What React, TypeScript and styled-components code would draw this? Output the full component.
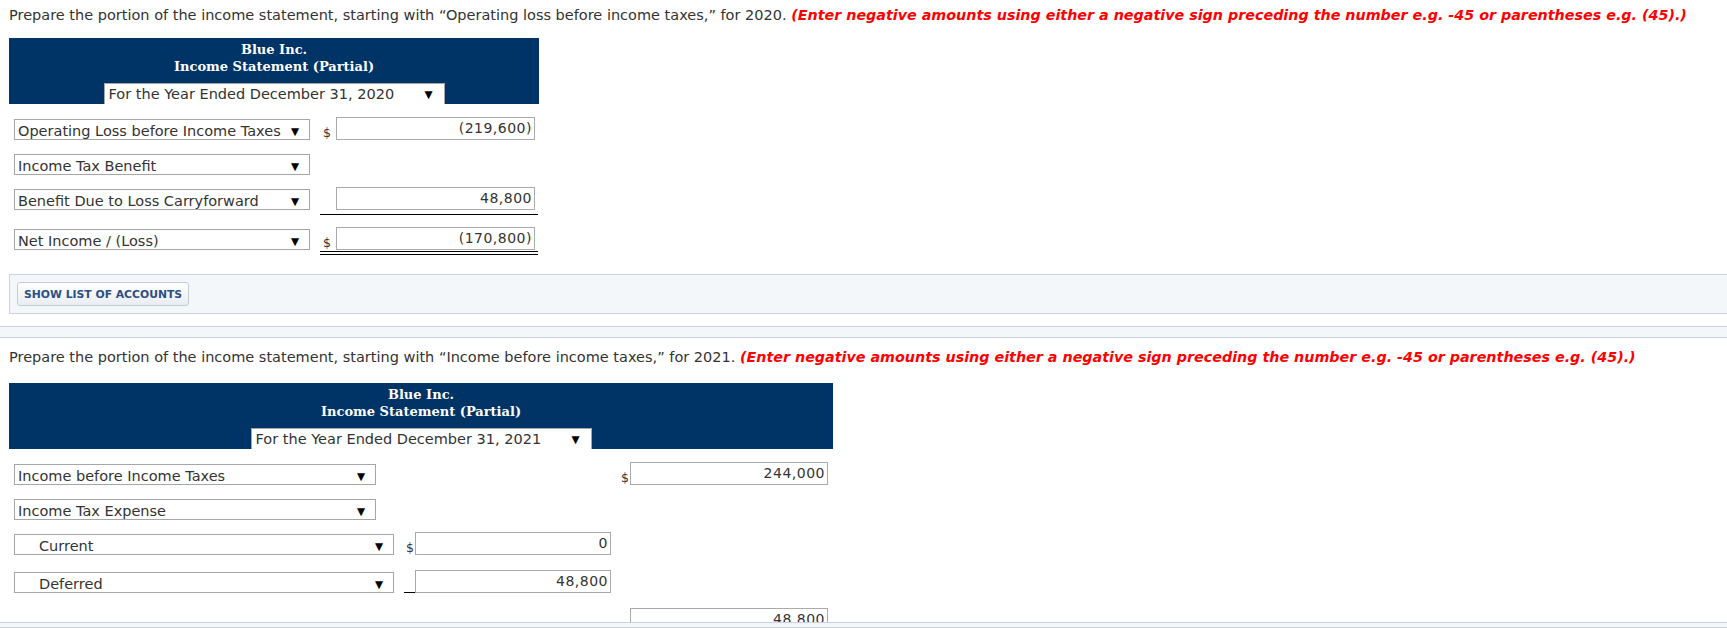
import styled, { createGlobalStyle } from "styled-components";

const GlobalStyle = createGlobalStyle`
  body {
    margin: 0;
    background: #fff;
    font-family: "DejaVu Sans", Verdana, sans-serif;
    color: #333;
  }
`;

const Page = styled.div`
  display: flex;
  flex-direction: column;
  height: 628px;
  overflow: hidden;
`;

const Section = styled.section<{ $clip?: boolean }>`
  padding-left: 9px;
  ${(p) => (p.$clip ? "flex: 1 1 0; min-height: 0; overflow: hidden;" : "flex: none;")}
`;

const Instruction = styled.p<{ $top: number }>`
  margin: ${(p) => p.$top}px 0 0;
  font-size: 14.5px;
  line-height: 16px;
  white-space: nowrap;
`;

const Hint = styled.span`
  color: #ff0000;
  font-weight: bold;
  font-style: italic;
  font-size: 14.3px;
`;

const Header = styled.div<{ $w: number; $top: number }>`
  width: ${(p) => p.$w}px;
  height: 66px;
  box-sizing: border-box;
  margin-top: ${(p) => p.$top}px;
  background: #003366;
  color: #fff;
  display: flex;
  flex-direction: column;
  align-items: center;
  padding-top: 3px;
  font-family: "DejaVu Serif", Georgia, serif;
  font-weight: bold;
  font-size: 13px;
  line-height: 17px;
`;

const DateSelect = styled.div`
  box-sizing: border-box;
  width: 341px;
  height: 21px;
  margin-top: auto;
  display: flex;
  align-items: center;
  justify-content: space-between;
  padding: 1px 11px 0 4px;
  background: #fff;
  border: 1px solid #a6a6a6;
  border-bottom: none;
  color: #333;
  font-family: "DejaVu Sans", Verdana, sans-serif;
  font-weight: normal;
  font-size: 14.5px;
`;

const Rows = styled.div`
  display: flex;
  flex-direction: column;
  gap: 12px;
  padding: 13px 0 0 5px;
`;

const Row = styled.div<{ $cols: string }>`
  display: grid;
  grid-template-columns: ${(p) => p.$cols};
  align-items: start;
`;

const Select = styled.div<{ $w: number; $indent?: boolean }>`
  box-sizing: border-box;
  width: ${(p) => p.$w}px;
  height: 21px;
  margin-top: 2px;
  display: flex;
  align-items: center;
  justify-content: space-between;
  padding: 2px 10px 0 ${(p) => (p.$indent ? 24 : 3)}px;
  background: #fff;
  border: 1px solid #a6a6a6;
  font-size: 14.5px;
  white-space: nowrap;
`;

const Arrow = styled.span`
  font-size: 10.5px;
  color: #000;
  margin-left: 4px;
`;

const Cell = styled.div<{ $line?: "single" | "double" | "space" }>`
  display: flex;
  align-items: flex-end;
  padding-right: 3px;
  width: fit-content;
  ${(p) =>
    p.$line === "single"
      ? "padding-bottom: 4px; border-bottom: 1px solid #000;"
      : p.$line === "double"
      ? "padding-bottom: 1px; border-bottom: 4px double #000;"
      : p.$line === "space"
      ? "padding-bottom: 3px;"
      : ""}
`;

const Dollar = styled.span<{ $w: number; $pad: number; $under?: boolean }>`
  box-sizing: border-box;
  width: ${(p) => p.$w}px;
  height: 23px;
  display: flex;
  align-items: flex-end;
  padding-left: ${(p) => p.$pad}px;
  font-size: 12.5px;
  line-height: 14px;
  color: #333;
  ${(p) => (p.$under ? "border-bottom: 1px solid #000;" : "")}
`;

const Amount = styled.div<{ $w: number }>`
  box-sizing: border-box;
  width: ${(p) => p.$w}px;
  height: 23px;
  border: 1px solid #aaa;
  background: #fff;
  text-align: right;
  padding-right: 2px;
  font-size: 14px;
  letter-spacing: 0.5px;
  line-height: 20px;
`;

const Panel = styled.div`
  margin-top: 19px;
  box-sizing: border-box;
  height: 40px;
  background: #f4f7fa;
  border: 1px solid #cbd2de;
  border-right: none;
  padding: 7px 0 0 7px;
`;

const AccountsButton = styled.button`
  height: 24px;
  padding: 0 6px;
  background: linear-gradient(#ffffff, #e9edf2);
  border: 1px solid #c5cdd8;
  border-radius: 3px;
  color: #2b4f86;
  font-family: "DejaVu Sans", Verdana, sans-serif;
  font-weight: bold;
  font-size: 10.8px;
`;

const Strip = styled.div<{ $top: number; $h: number }>`
  flex: none;
  margin-top: ${(p) => p.$top}px;
  height: ${(p) => p.$h}px;
  background: #f4f7fa;
  border-top: 1px solid #cbd2de;
  border-bottom: 1px solid #cbd2de;
`;

type Line = "single" | "double" | "space";
type AmountSpec = { dollar?: boolean; under?: boolean; value: string; line?: Line };

function Money({ spec, slot, pad, w }: { spec: AmountSpec; slot: number; pad: number; w: number }) {
  return (
    <Cell $line={spec.line}>
      <Dollar $w={slot} $pad={pad} $under={spec.under}>
        {spec.dollar ? "$" : ""}
      </Dollar>
      <Amount $w={w}>{spec.value}</Amount>
    </Cell>
  );
}

const rows2020: { label: string; cell?: AmountSpec }[] = [
  { label: "Operating Loss before Income Taxes", cell: { dollar: true, value: "(219,600)" } },
  { label: "Income Tax Benefit" },
  { label: "Benefit Due to Loss Carryforward", cell: { value: "48,800", line: "single" } },
  { label: "Net Income / (Loss)", cell: { dollar: true, value: "(170,800)", line: "double" } },
];

const rows2021: {
  label?: string;
  w?: number;
  indent?: boolean;
  a?: AmountSpec;
  b?: AmountSpec;
}[] = [
  { label: "Income before Income Taxes", w: 362, b: { dollar: true, value: "244,000" } },
  { label: "Income Tax Expense", w: 362 },
  { label: "Current", w: 380, indent: true, a: { dollar: true, value: "0", line: "space" } },
  { label: "Deferred", w: 380, indent: true, a: { under: true, value: "48,800", line: "space" } },
  { b: { value: "48,800" } },
];

function Title({ year, w, top }: { year: number; w: number; top: number }) {
  return (
    <Header $w={w} $top={top}>
      <div>Blue Inc.</div>
      <div>Income Statement (Partial)</div>
      <DateSelect>
        <span>For the Year Ended December 31, {year}</span>
        <Arrow>▼</Arrow>
      </DateSelect>
    </Header>
  );
}

export default function App() {
  return (
    <Page>
      <GlobalStyle />
      <Section>
        <Instruction $top={7}>
          Prepare the portion of the income statement, starting with “Operating loss before income taxes,” for 2020.{" "}
          <Hint>(Enter negative amounts using either a negative sign preceding the number e.g. -45 or parentheses e.g. (45).)</Hint>
        </Instruction>
        <Title year={2020} w={530} top={15} />
        <Rows>
          {rows2020.map((r) => (
            <Row key={r.label} $cols="306px 220px">
              <Select $w={296}>
                <span>{r.label}</span>
                <Arrow>▼</Arrow>
              </Select>
              {r.cell ? <Money spec={r.cell} slot={16} pad={3} w={199} /> : <div />}
            </Row>
          ))}
        </Rows>
        <Panel>
          <AccountsButton>SHOW LIST OF ACCOUNTS</AccountsButton>
        </Panel>
      </Section>
      <Strip $top={12} $h={10} />
      <Section $clip>
        <Instruction $top={11}>
          Prepare the portion of the income statement, starting with “Income before income taxes,” for 2021.{" "}
          <Hint>(Enter negative amounts using either a negative sign preceding the number e.g. -45 or parentheses e.g. (45).)</Hint>
        </Instruction>
        <Title year={2021} w={824} top={18} />
        <Rows>
          {rows2021.map((r, i) => (
            <Row key={i} $cols="390px 215px 212px">
              {r.label ? (
                <Select $w={r.w ?? 362} $indent={r.indent}>
                  <span>{r.label}</span>
                  <Arrow>▼</Arrow>
                </Select>
              ) : (
                <div />
              )}
              {r.a ? <Money spec={r.a} slot={11} pad={2} w={196} /> : <div />}
              {r.b ? <Money spec={r.b} slot={11} pad={2} w={198} /> : <div />}
            </Row>
          ))}
        </Rows>
      </Section>
      <Strip $top={0} $h={4} />
    </Page>
  );
}
